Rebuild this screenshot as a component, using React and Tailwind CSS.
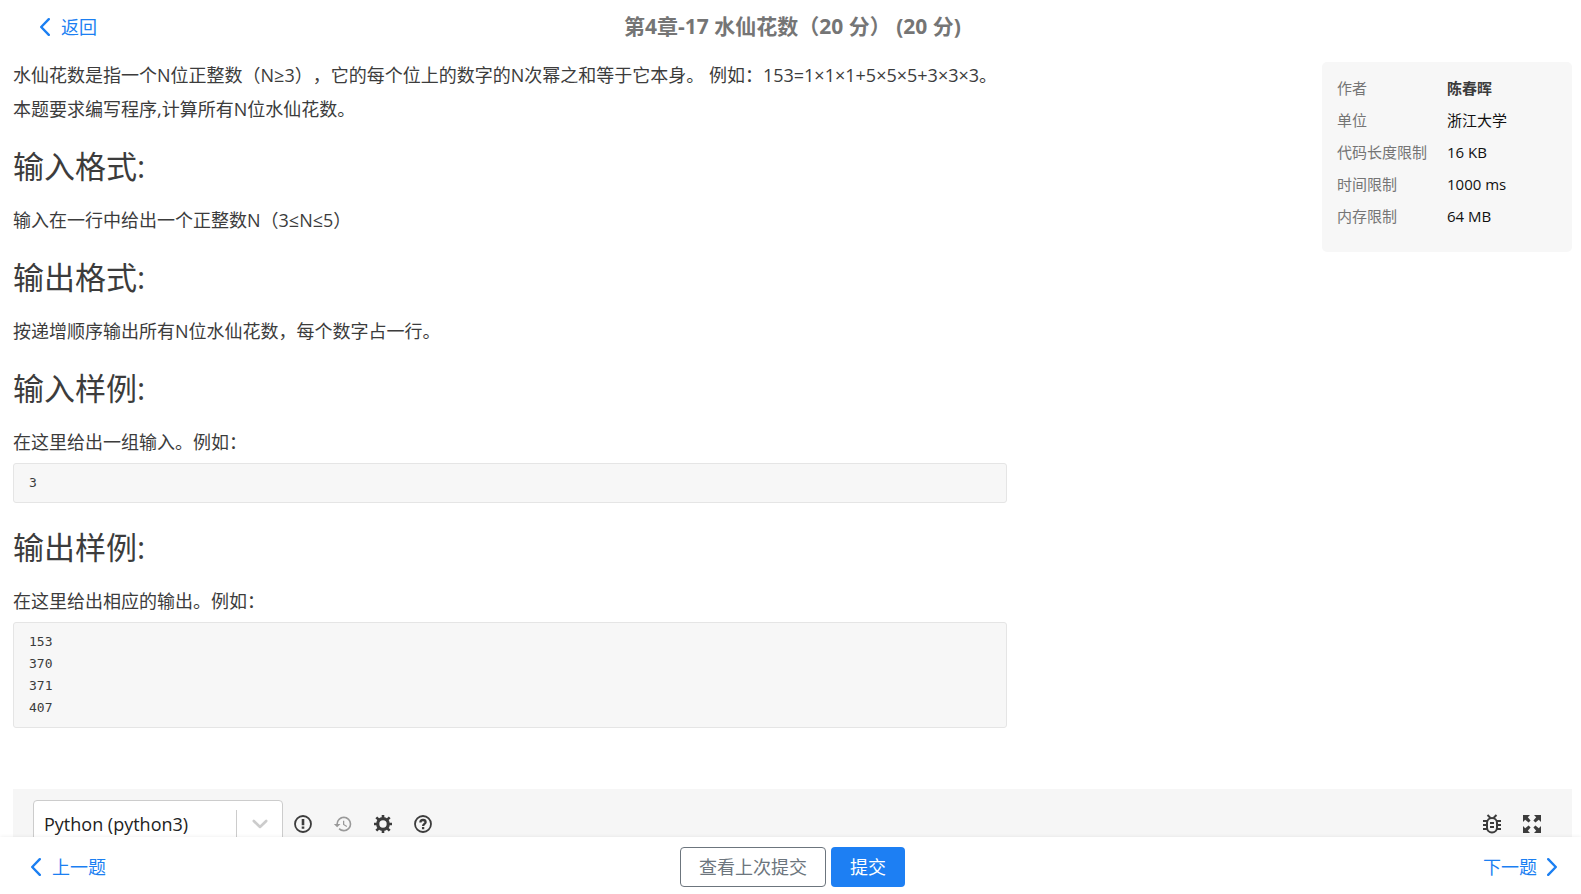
import React, { useState } from 'react';
import { MdHistory } from 'react-icons/md';

const INFO = [
  { label: '作者', value: '陈春晖', strong: true },
  { label: '单位', value: '浙江大学' },
  { label: '代码长度限制', value: '16 KB' },
  { label: '时间限制', value: '1000 ms' },
  { label: '内存限制', value: '64 MB' },
];

function Chevron({ flip }) {
  return (
    <svg viewBox="0 0 10 18" className="w-[10px] h-[18px]" fill="none" stroke="currentColor" strokeWidth="2.4" strokeLinecap="round" strokeLinejoin="round">
      <path d={flip ? 'M1.2 1.2 8.8 9l-7.6 7.8' : 'M8.8 1.2 1.2 9l7.6 7.8'} />
    </svg>
  );
}

function AlertIcon() {
  return (
    <svg viewBox="0 0 18 18" className="size-[18px]" fill="none" stroke="currentColor">
      <circle cx="9" cy="9" r="8" strokeWidth="1.8" />
      <path strokeWidth="2.6" d="M9 4v6.2M9 11.6v2.2" />
    </svg>
  );
}

function HelpIcon() {
  return (
    <svg viewBox="0 0 18 18" className="size-[18px]" fill="none" stroke="currentColor">
      <circle cx="9" cy="9" r="8" strokeWidth="1.8" />
      <path strokeWidth="2.3" d="M6.4 7.4C6.4 5.8 7.5 5 9 5s2.6.8 2.6 2.2c0 1.7-2.5 1.8-2.5 3.8M9.1 12.1v2.1" />
    </svg>
  );
}

function GearIcon() {
  return (
    <svg viewBox="0 0 18 18" className="size-[18px]" fill="none" stroke="currentColor">
      <circle cx="9" cy="9" r="5.3" strokeWidth="3.2" />
      <path strokeWidth="2.6" d="M9 0v3M9 15v3M0 9h3M15 9h3M2.3 2.3l2.4 2.4M13.3 13.3l2.4 2.4M15.7 2.3l-2.4 2.4M4.7 13.3l-2.4 2.4" />
    </svg>
  );
}

function BugIcon() {
  return (
    <svg viewBox="0 0 18 20" className="w-[18px] h-5" fill="none" stroke="currentColor" strokeWidth="2">
      <rect x="4" y="4" width="10" height="14.5" rx="5" />
      <path d="M4.5 1l3 3M13.5 1l-3 3M0 7h4.5M0 11h4M0 15h4.5M13.5 7H18M14 11h4M13.5 15H18M7 9h4M7 13h4" />
    </svg>
  );
}

function ExpandIcon() {
  return (
    <svg viewBox="0 0 18 18" className="size-[18px]" fill="currentColor">
      <path d="M0 0h7L4.8 2.2 7.6 5.6 5.6 7.6 2.2 4.8 0 7zM18 0v7l-2.2-2.2L12.4 7.6 10.4 5.6l2.8-3.4L11 0zM0 18v-7l2.2 2.2L5.6 10.4 7.6 12.4l-2.8 3.4L7 18zM18 18h-7l2.2-2.2-2.8-3.4 2-2 3.4 2.8L18 11z" />
    </svg>
  );
}

function IconButton({ label, children }) {
  return (
    <button type="button" aria-label={label} className="flex items-center justify-center size-10">
      {children}
    </button>
  );
}

function Heading({ children }) {
  return <h3 className="mt-6 mb-[21px] text-[31px] leading-10">{children}</h3>;
}

function Paragraph({ children }) {
  return <p className="mb-2 leading-[26px]">{children}</p>;
}

function Sample({ children }) {
  return (
    <pre className="px-[15px] py-2 bg-[#f7f7f7] border border-[#e5e5e5] rounded-[3px] text-[13px] leading-[22px] font-['DejaVu_Sans_Mono',monospace]">
      {children}
    </pre>
  );
}

export default function App() {
  const [lang, setLang] = useState('python3');

  return (
    <div className="h-screen flex flex-col bg-white text-[#3c3c3c] text-[18px] font-['Open_Sans','Noto_Sans_CJK_SC',sans-serif] [text-spacing-trim:space-all]">
      <div className="flex-1 min-h-0 overflow-y-auto [scrollbar-width:none]">
        <header className="grid grid-cols-[1fr_auto_1fr] items-center h-[54px] pl-10 pr-9">
          <a href="#back" className="flex items-center gap-[11px] text-[#1b7ff2]">
            <Chevron />
            返回
          </a>
          <h1 className="text-[21px] font-bold text-[#757575]">第4章-17 水仙花数（20 分） (20 分)</h1>
        </header>

        <main className="pl-[13px] pr-[9px]">
          <div className="flex items-start justify-between gap-8 pt-2">
            <article className="flex-1 max-w-[994px]">
              <Paragraph>水仙花数是指一个N位正整数（N≥3），它的每个位上的数字的N次幂之和等于它本身。 例如：153=1×1×1+5×5×5+3×3×3。</Paragraph>
              <Paragraph>本题要求编写程序,计算所有N位水仙花数。</Paragraph>
              <Heading>输入格式:</Heading>
              <Paragraph>输入在一行中给出一个正整数N（3≤N≤5）</Paragraph>
              <Heading>输出格式:</Heading>
              <Paragraph>按递增顺序输出所有N位水仙花数，每个数字占一行。</Paragraph>
              <Heading>输入样例:</Heading>
              <Paragraph>在这里给出一组输入。例如：</Paragraph>
              <Sample>3</Sample>
              <Heading>输出样例:</Heading>
              <Paragraph>在这里给出相应的输出。例如：</Paragraph>
              <Sample>{'153\n370\n371\n407'}</Sample>
            </article>

            <dl className="grid grid-cols-[110px_1fr] w-[250px] px-[15px] pt-[10px] pb-5 rounded-[5px] bg-[#f7f7f7] text-[15px] leading-8">
              {INFO.map((item) => (
                <React.Fragment key={item.label}>
                  <dt className="text-[#757575]">{item.label}</dt>
                  <dd className={item.strong ? 'font-bold' : 'text-[#111]'}>{item.value}</dd>
                </React.Fragment>
              ))}
            </dl>
          </div>

          <section className="mt-[61px] px-5 py-[11px] flex items-center justify-between bg-[#f6f6f6]">
            <div className="flex items-center">
              <div className="relative w-[250px]">
                <select
                  aria-label="编程语言"
                  value={lang}
                  onChange={(e) => setLang(e.target.value)}
                  className="appearance-none w-full h-12 pl-[10px] pr-12 bg-white border border-[#ccc] rounded text-[#222]"
                >
                  <option value="python3">Python (python3)</option>
                </select>
                <span className="absolute inset-y-[10px] right-0 flex items-center justify-center w-[47px] border-l border-[#ccc] text-[#ccc] pointer-events-none">
                  <svg viewBox="0 0 20 20" className="size-5" fill="none" stroke="currentColor" strokeWidth="2.6" strokeLinecap="round" strokeLinejoin="round">
                    <path d="M3.8 7l6.2 6 6.2-6" />
                  </svg>
                </span>
              </div>
              <IconButton label="提示"><AlertIcon /></IconButton>
              <IconButton label="历史"><MdHistory className="size-5 text-[#999]" /></IconButton>
              <IconButton label="设置"><GearIcon /></IconButton>
              <IconButton label="帮助"><HelpIcon /></IconButton>
            </div>
            <div className="flex items-center">
              <IconButton label="调试"><BugIcon /></IconButton>
              <IconButton label="全屏"><ExpandIcon /></IconButton>
            </div>
          </section>
        </main>
      </div>

      <footer className="relative grid grid-cols-[1fr_auto_1fr] items-center h-[57px] pt-[3px] pl-7 pr-6 bg-white shadow-[0_0_4px_rgba(0,0,0,0.08)]">
        <a href="#prev" className="flex items-center gap-[11px] pl-[3px] text-[#1b7ff2]">
          <Chevron />
          上一题
        </a>
        <div className="flex gap-[5px]">
          <button type="button" className="h-10 px-[18px] border border-[#6c757d] rounded text-[#6c757d]">查看上次提交</button>
          <button type="button" className="h-10 px-[19px] rounded bg-[#1d7ff3] text-white">提交</button>
        </div>
        <a href="#next" className="flex items-center justify-end gap-[10px] text-[#1b7ff2]">
          下一题
          <Chevron flip />
        </a>
      </footer>
    </div>
  );
}
